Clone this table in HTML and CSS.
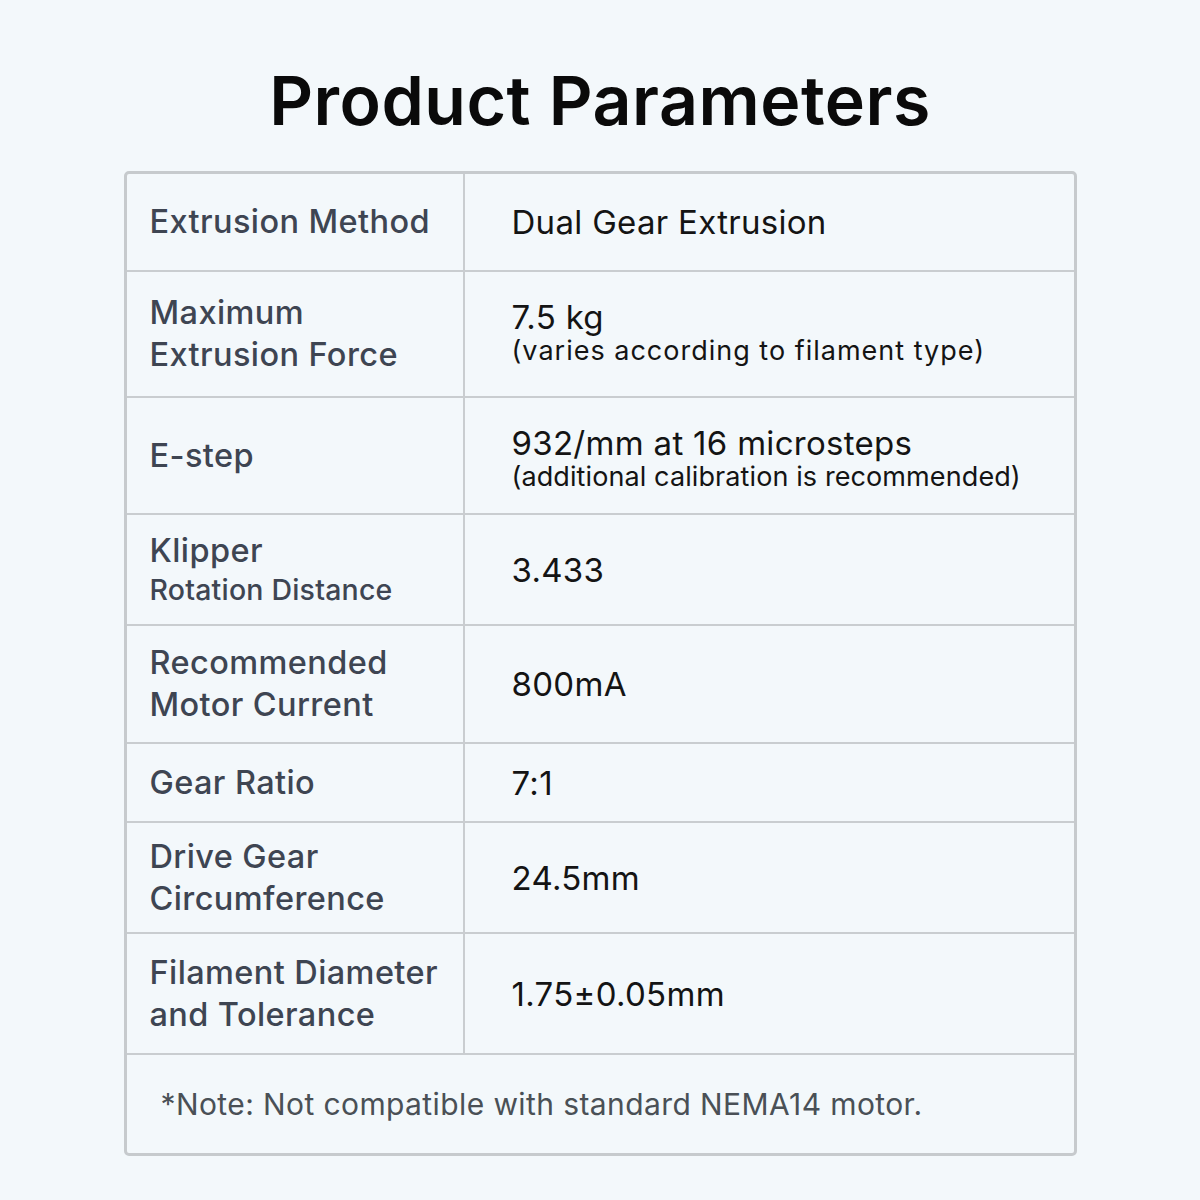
FILE: index.html
```html
<!DOCTYPE html>
<html>
<head>
<meta charset="utf-8">
<link rel="stylesheet" href="styles.css">
</head>
<body>
<h1 class="title">Product Parameters</h1>
<div class="table">
  <div class="row r1"><div class="label">Extrusion Method</div><div class="value">Dual Gear Extrusion</div></div>
  <div class="row r2"><div class="label">Maximum<br>Extrusion Force</div><div class="value"><span class="main">7.5 kg</span><span class="sub">(varies according to filament type)</span></div></div>
  <div class="row r3"><div class="label">E-step</div><div class="value"><span class="main">932/mm at 16 microsteps</span><span class="sub">(additional calibration is recommended)</span></div></div>
  <div class="row r4"><div class="label"><span class="k1">Klipper</span><span class="k2">Rotation Distance</span></div><div class="value">3.433</div></div>
  <div class="row r5"><div class="label">Recommended<br>Motor Current</div><div class="value">800mA</div></div>
  <div class="row r6"><div class="label">Gear Ratio</div><div class="value">7:1</div></div>
  <div class="row r7"><div class="label">Drive Gear<br>Circumference</div><div class="value">24.5mm</div></div>
  <div class="row r8"><div class="label">Filament Diameter<br>and Tolerance</div><div class="value">1.75±0.05mm</div></div>
  <div class="note">*Note: Not compatible with standard NEMA14 motor.</div>
</div>
</body>
</html>
```
FILE: styles.css
```css
html, body {
  margin: 0;
  padding: 0;
  background: #f3f8fb;
}
body {
  font-family: Inter, "Noto Sans", sans-serif;
  width: 1200px;
  height: 1200px;
  overflow: hidden;
}
.title {
  margin: 60px 0 30px;
  font-size: 68px;
  line-height: 81px;
  font-weight: 600;
  color: #0a0a0a;
  text-align: center;
  letter-spacing: 0.5px;
}
.table {
  width: 953px;
  margin: 0 auto;
  border: 3px solid #c6cacd;
  border-radius: 5px;
  box-sizing: border-box;
}
.row {
  display: grid;
  grid-template-columns: 338px 1fr;
  border-bottom: 2px solid #c9cdd0;
  box-sizing: border-box;
}
.r1 { height: 98px; }
.r2 { height: 126px; }
.r3 { height: 117px; }
.r4 { height: 111px; }
.r5 { height: 118px; }
.r6 { height: 79px; }
.r7 { height: 111px; }
.r8 { height: 121px; }
.label {
  border-right: 2px solid #c9cdd0;
  padding-left: 23px;
  display: flex;
  flex-direction: column;
  justify-content: center;
  font-size: 32.5px;
  line-height: 42px;
  font-weight: 500;
  color: #3e4552;
  letter-spacing: 0.4px;
}
.k1 { font-size: 32.5px; line-height: 41px; }
.k2 { font-size: 28.5px; line-height: 38px; letter-spacing: 0.2px; }
.value {
  padding-left: 47px;
  display: flex;
  flex-direction: column;
  justify-content: center;
  font-size: 33px;
  line-height: 40px;
  color: #141414;
  letter-spacing: 0.3px;
}
.main { font-size: 33px; line-height: 34px; }
.sub { font-size: 27px; line-height: 34px; letter-spacing: 0.1px; }
.r2 .sub { letter-spacing: 1px; }
.r3 .value { padding-top: 8px; }
.note {
  height: 98px;
  padding-left: 34px;
  display: flex;
  align-items: center;
  font-size: 30px;
  color: #4a5056;
  letter-spacing: 0.4px;
}
```
